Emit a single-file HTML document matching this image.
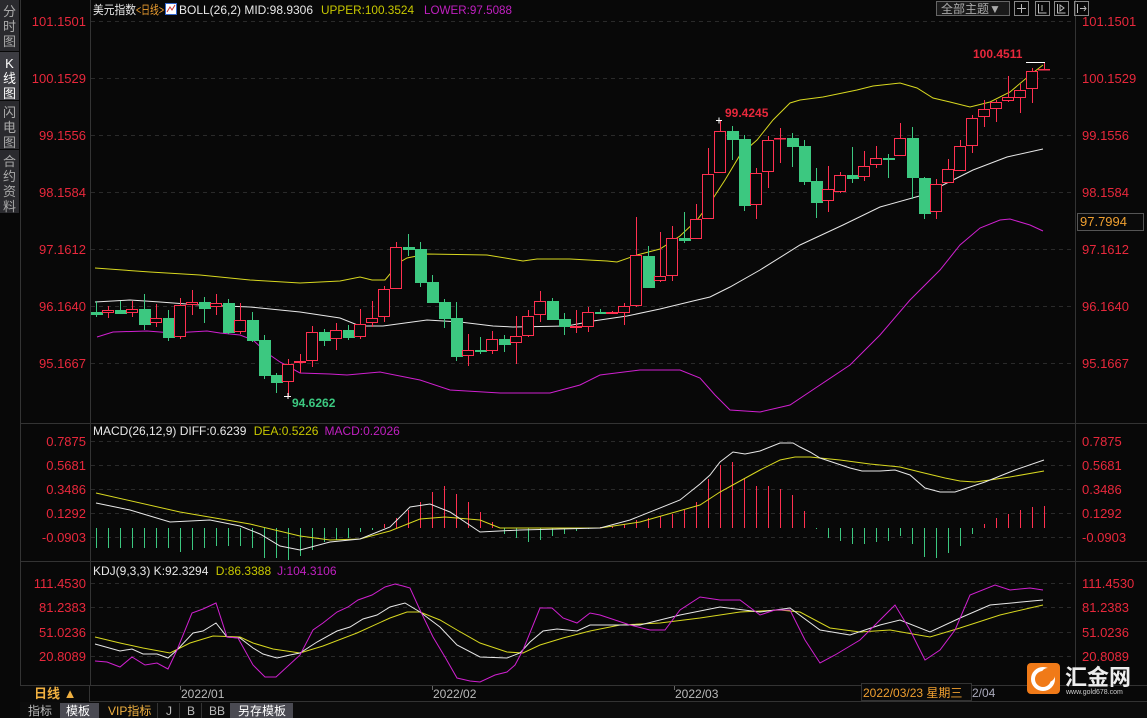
<!DOCTYPE html>
<html><head><meta charset="utf-8"><style>
html,body{margin:0;padding:0;background:#080808;width:1147px;height:718px;overflow:hidden}
body{position:relative;font-family:"Liberation Sans","Noto Sans CJK SC",sans-serif}
.side{position:absolute;left:0;width:19px;background:#2a2a2e;color:#aaa;font-size:13px;line-height:15px;text-align:center;padding-top:4px;box-sizing:border-box}
svg{position:absolute;left:0;top:0}
</style></head><body>
<div class="side" style="top:0;height:51px">分<br>时<br>图</div>
<div class="side" style="top:52px;height:48px;background:#3c3c42;color:#fff">K<br>线<br>图</div>
<div class="side" style="top:101px;height:48px">闪<br>电<br>图</div>
<div class="side" style="top:150px;height:63px">合<br>约<br>资<br>料</div>
<svg id="s" width="1147" height="718" xmlns="http://www.w3.org/2000/svg" font-family="Liberation Sans, Noto Sans CJK SC, sans-serif">
<rect x="20" y="0" width="1" height="718" fill="#333"/>
<line x1="90.5" y1="0" x2="90.5" y2="686" stroke="#333"/>
<line x1="1075.5" y1="0" x2="1075.5" y2="686" stroke="#333"/>
<line x1="20" y1="423.5" x2="1147" y2="423.5" stroke="#333"/>
<line x1="20" y1="561.5" x2="1147" y2="561.5" stroke="#333"/>
<line x1="20" y1="685.5" x2="1147" y2="685.5" stroke="#333"/>
<line x1="20" y1="701.5" x2="1147" y2="701.5" stroke="#333"/>
<g id="grid" stroke="#2a2a2a" stroke-dasharray="4,4"></g>
<g font-size="12" fill="#e8e8e8">
<text x="93" y="14" textLength="43" lengthAdjust="spacingAndGlyphs">美元指数</text>
<text x="136" y="14" fill="#f0a030" textLength="28" lengthAdjust="spacingAndGlyphs">&lt;日线&gt;</text>
<text x="179" y="14" textLength="134" lengthAdjust="spacingAndGlyphs">BOLL(26,2) MID:98.9306</text>
<text x="321" y="14" fill="#c8c800" textLength="93" lengthAdjust="spacingAndGlyphs">UPPER:100.3524</text>
<text x="424" y="14" fill="#c020c0" textLength="88" lengthAdjust="spacingAndGlyphs">LOWER:97.5088</text>
<text x="93" y="435">MACD(26,12,9) DIFF:0.6239 <tspan fill="#c8c800" dx="4">DEA:0.5226</tspan><tspan fill="#c020c0" dx="6">MACD:0.2026</tspan></text>
<text x="93" y="575">KDJ(9,3,3) K:92.3294 <tspan fill="#c8c800" dx="4">D:86.3388</tspan><tspan fill="#c020c0" dx="6">J:104.3106</tspan></text>
</g>
<rect x="165.5" y="3.5" width="11" height="11" fill="#fff" stroke="#36c"/><polyline points="167,12 170,7 172,10 175,5" fill="none" stroke="#c33"/>
<rect x="936.5" y="1.5" width="73" height="14" fill="#1a1a1a" stroke="#666"/>
<text x="941" y="13" font-size="12" fill="#aaa">全部主题▼</text>
<g fill="none" stroke="#888"><rect x="1014.5" y="1.5" width="14" height="14"/><rect x="1035.5" y="1.5" width="14" height="14"/><rect x="1054.5" y="1.5" width="14" height="14"/><rect x="1074.5" y="1.5" width="14" height="14"/></g>
<g stroke="#bbb" fill="none"><path d="M1021.5 4v9M1017 8.5h9"/><path d="M1038.5 4v9h8M1042 5v6"/><path d="M1057.5 4v9h8M1060 5l4 3-4 3z"/><path d="M1077.5 4v9M1080 8.5h6M1084 6l2 2.5-2 2.5"/></g>
<g id="ax" font-size="13" fill="#e8283c"></g>
<rect x="1077.5" y="213.5" width="66" height="17" fill="#0a0a0a" stroke="#555"/>
<text x="1080" y="226" font-size="13" fill="#f0a030">97.7994</text>
<g id="c"></g>
<text x="973" y="58" font-size="12" font-weight="bold" fill="#e8283c">100.4511</text>
<line x1="1026" y1="62.5" x2="1045" y2="62.5" stroke="#fff"/>
<text x="725" y="117" font-size="12" font-weight="bold" fill="#e8283c">99.4245</text>
<path d="M716 120.5h6M719 117.5v6" stroke="#fff"/>
<text x="292" y="407" font-size="12" font-weight="bold" fill="#3cc880">94.6262</text>
<path d="M284 396.5h7M288 393v6" stroke="#fff"/>
<rect x="20" y="686" width="70" height="16" fill="#0a0a0a"/>
<text x="34" y="698" font-size="13" font-weight="bold" fill="#f0b040">日线 ▲</text>
<line x1="89.5" y1="686" x2="89.5" y2="702" stroke="#333"/>
<g font-size="12" fill="#bbb"><text x="181" y="698">2022/01</text><text x="433" y="698">2022/02</text><text x="675" y="698">2022/03</text></g>
<line x1="180.5" y1="686" x2="180.5" y2="690" stroke="#666"/><line x1="432.5" y1="686" x2="432.5" y2="690" stroke="#666"/><line x1="674.5" y1="686" x2="674.5" y2="690" stroke="#666"/>
<rect x="861.5" y="683.5" width="110" height="17" fill="#0a0a0a" stroke="#333"/>
<text x="863" y="697" font-size="12" fill="#f0a030">2022/03/23 星期三</text>
<text x="972" y="697" font-size="12" fill="#aab">2/04</text>
<rect x="20" y="702" width="1127" height="16" fill="#0c0c0c"/>
<rect x="60" y="703" width="39" height="15" fill="#4a4a52"/>
<rect x="230" y="703" width="63" height="15" fill="#4a4a52"/>
<g font-size="12" fill="#bbb"><text x="28" y="715">指标</text><text x="66" y="715" fill="#fff">模板</text><text x="108" y="715" fill="#f0b040">VIP指标</text><text x="166" y="715">J</text><text x="187" y="715">B</text><text x="209" y="715">BB</text><text x="238" y="715" fill="#fff">另存模板</text></g>
<g stroke="#333"><line x1="157.5" y1="703" x2="157.5" y2="718"/><line x1="179.5" y1="703" x2="179.5" y2="718"/><line x1="201.5" y1="703" x2="201.5" y2="718"/></g>
<rect x="1027" y="663" width="33" height="31" rx="4" fill="#f07a18"/>
<circle cx="1043" cy="679" r="10" fill="none" stroke="#fff" stroke-width="4"/>
<circle cx="1048" cy="675" r="7" fill="#f07a18"/>
<text x="1065" y="685" font-size="22" font-weight="bold" fill="#eee">汇金网</text>
<text x="1066" y="694" font-size="7" fill="#ccc">www.gold678.com</text>
</svg>
<script>
var NS="http://www.w3.org/2000/svg",c=document.getElementById('c');
function el(t,a){var e=document.createElementNS(NS,t);for(var k in a)e.setAttribute(k,a[k]);c.appendChild(e);return e}
var ax=document.getElementById('ax'),gr=document.getElementById('grid');
function lab(y,t){var e=document.createElementNS(NS,'text');e.setAttribute('x',1082);e.setAttribute('y',y+5);e.textContent=t;ax.appendChild(e);
var e2=document.createElementNS(NS,'text');e2.setAttribute('x',86);e2.setAttribute('y',y+5);e2.setAttribute('text-anchor','end');e2.textContent=t;ax.appendChild(e2);
var l=document.createElementNS(NS,'line');l.setAttribute('x1',91);l.setAttribute('x2',1075);l.setAttribute('y1',y+.5);l.setAttribute('y2',y+.5);gr.appendChild(l);}
[[21,'101.1501'],[78,'100.1529'],[135,'99.1556'],[192,'98.1584'],[249,'97.1612'],[306,'96.1640'],[363,'95.1667'],[441,'0.7875'],[465,'0.5681'],[489,'0.3486'],[513,'0.1292'],[537,'-0.0903'],[583,'111.4530'],[607,'81.2383'],[632,'51.0236'],[656,'20.8089']].forEach(function(a){lab(a[0],a[1])});
var K=[[0,312,314,301,317],[1,310,313,306,318],[0,310,313,301,313],[1,309,313,301,317],[0,309,324,294,330],[1,318,323,304,327],[0,318,337,310,341],[1,305,337,298,339],[1,302,305,290,315],[0,302,308,297,323],[1,303,307,294,315],[0,303,332,299,334],[1,320,332,303,334],[0,320,340,312,342],[0,340,375,335,379],[0,375,382,373,393],[1,364,382,359,396],[1,361,363,354,373],[1,332,361,326,367],[0,332,340,329,346],[1,330,339,323,350],[0,330,337,325,340],[1,324,337,309,339],[1,318,323,301,327],
[1,289,317,286,322],[1,247,289,242,289],[0,247,249,234,256],[0,249,282,242,287],[0,282,302,275,303],[0,302,318,299,328],[0,318,356,302,361],[1,350,356,334,366],[0,350,351,337,354],[1,339,351,331,354],[0,339,344,335,352],[1,336,343,316,364],[1,316,336,310,337],[1,301,315,291,322],[0,301,319,298,319],[0,319,326,313,335],[1,326,328,310,333],[1,312,327,307,332],[0,312,313,309,313],[1,312,314,311,314],[1,306,313,303,325],[1,255,306,217,307],[0,256,287,246,287],[1,276,281,232,282],[1,238,276,226,281],[0,238,240,212,243],[1,219,239,204,239],
[1,174,219,148,219],[1,131,173,120,173],[0,131,139,126,160],[0,139,205,135,211],[1,173,205,168,219],[1,140,172,136,188],[1,138,139,128,163],[0,138,146,133,167],[0,146,181,140,185],[0,181,202,168,218],[1,189,201,166,212],[1,175,192,172,193],[0,175,178,147,183],[1,166,177,151,181],[1,158,165,146,168],[0,158,159,154,178],[1,138,156,123,156],[0,138,177,127,199],[0,178,213,177,219],[1,184,212,179,219],[1,169,183,159,183],[1,146,171,140,171],[1,118,146,115,153],[1,109,117,100,127],[1,102,109,100,122],[1,97,101,76,102],[1,90,98,84,113],[1,71,89,68,103],[1,69,69,62,69]];
function line(pts,col){el('polyline',{points:pts.map(function(p){return p.join(',')}).join(' '),fill:'none',stroke:col,'stroke-width':1});}
line([[95,268],[150,272],[200,275],[250,280],[300,283],[340,281],[360,277],[372,280],[385,280],[400,262],[407,258],[427,254],[487,255],[523,261],[537,259],[570,259],[607,261],[617,262],[637,255],[660,249],[680,236],[697,220],[710,203],[725,180],[740,155],[757,140],[773,120],[790,103],[800,100],[823,97],[857,90],[873,86],[900,83],[917,88],[933,98],[950,102],[970,107],[990,102],[1010,92],[1030,75],[1043,65]],'#d8d820');
line([[95,302],[130,300],[160,302],[200,305],[250,307],[300,312],[340,318],[360,326],[383,326],[427,320],[460,322],[493,326],[513,327],[567,326],[593,321],[627,316],[660,309],[693,301],[710,297],[730,287],[760,270],[800,245],[843,225],[880,207],[923,195],[973,170],[1007,157],[1043,149]],'#e8e8e8');
line([[97,337],[113,332],[147,331],[173,333],[207,331],[220,333],[240,335],[253,340],[267,353],[280,362],[300,373],[330,374],[347,375],[380,372],[420,380],[450,390],[500,393],[550,393],[580,385],[600,375],[640,370],[680,370],[700,378],[715,395],[730,410],[760,412],[790,405],[820,385],[850,365],[880,335],[910,300],[940,270],[960,245],[980,228],[1000,220],[1010,219],[1030,225],[1043,231]],'#d020d0');
K.forEach(function(k,i){var x=96+i*12,col=k[0]?'#ff3050':'#3cc880';
el('line',{x1:x+.5,x2:x+.5,y1:k[3],y2:k[4],stroke:col});
var h=Math.max(k[2]-k[1],1);
if(k[0])el('rect',{x:x-5.5,y:k[1]+.5,width:11,height:Math.max(h-1,0.5),fill:'#080808',stroke:col});
else el('rect',{x:x-5,y:k[1],width:12,height:h+1,fill:col});});
var M=[-20,-20,-20,-20,-20,-20,-20,-24,-22,-20,-18,-18,-18,-20,-30,-30,-32,-28,-22,-14,-12,-10,-4,-2,4,10,18,26,36,42,34,26,16,6,-6,-10,-14,-12,-8,-6,-3,-1,1,2,4,8,10,12,14,18,26,
49,63,66,50,42,42,39,33,17,-1,-10,-13,-16,-16,-14,-13,-8,-16,-29,-30,-25,-18,-6,4,10,14,18,21,22];
M.forEach(function(v,i){var x=96+i*12+.5;el('line',{x1:x,x2:x,y1:528,y2:528-v,stroke:v>0?'#ff3050':'#3cc880'});});
line([[96,493],[180,512],[250,524],[300,536],[330,540],[360,539],[390,531],[420,519],[445,517],[480,520],[500,528],[600,528],[640,522],[700,505],[720,492],[740,481],[760,470],[780,460],[795,457],[810,457],[840,460],[870,464],[900,467],[920,472],[945,478],[960,481],[975,482],[990,480],[1010,477],[1044,471]],'#d8d820');
line([[96,503],[130,510],[170,522],[210,520],[240,526],[260,534],[280,546],[300,550],[330,542],[360,539],[390,527],[410,507],[430,504],[450,512],[480,532],[520,530],[600,528],[630,520],[680,500],[700,484],[710,475],[720,462],[733,452],[745,454],[760,451],[780,443],[793,443],[800,447],[810,452],[820,458],[835,463],[850,468],[862,471],[880,471],[895,470],[910,475],[925,488],[940,492],[955,492],[970,487],[985,482],[1000,476],[1015,470],[1044,460]],'#e8e8e8');
line([[95,637],[120,643],[143,648],[170,653],[190,643],[213,636],[240,637],[253,643],[273,649],[300,653],[323,646],[357,633],[390,618],[407,612],[420,612],[440,620],[457,630],[480,643],[507,652],[523,653],[540,645],[563,638],[590,631],[620,625],[660,623],[700,618],[740,612],[780,610],[800,612],[830,628],[860,632],[890,630],[930,637],[960,628],[1000,615],[1043,605]],'#d8d820');
line([[95,644],[120,651],[132,649],[143,654],[157,654],[168,658],[177,650],[193,633],[203,631],[216,623],[227,637],[240,638],[253,648],[263,654],[277,658],[290,655],[300,653],[317,642],[337,631],[350,627],[363,619],[377,615],[390,607],[405,603],[420,612],[440,627],[457,645],[480,657],[507,658],[520,653],[530,642],[543,631],[557,629],[577,631],[590,625],[640,625],[680,615],[720,607],[760,612],[790,608],[820,630],[850,635],[880,625],[900,620],[930,632],[960,618],[990,605],[1043,600]],'#e8e8e8');
line([[95,661],[107,662],[120,667],[132,657],[145,665],[157,663],[168,669],[177,650],[192,613],[203,609],[216,603],[227,637],[238,638],[253,665],[265,677],[276,677],[300,655],[313,630],[323,623],[337,612],[348,607],[358,600],[372,595],[385,587],[395,584],[403,586],[410,588],[420,610],[433,637],[445,657],[457,678],[470,681],[480,682],[495,675],[507,672],[515,665],[523,650],[540,608],[552,608],[563,618],[577,623],[590,613],[600,615],[630,625],[650,630],[665,630],[680,610],[700,597],[720,600],[740,600],[760,615],[775,610],[790,610],[805,640],[820,663],[835,655],[860,640],[880,620],[895,605],[910,630],[925,660],[940,650],[955,630],[970,595],[995,585],[1010,590],[1030,588],[1043,590]],'#d020d0');
</script>
</body></html>
